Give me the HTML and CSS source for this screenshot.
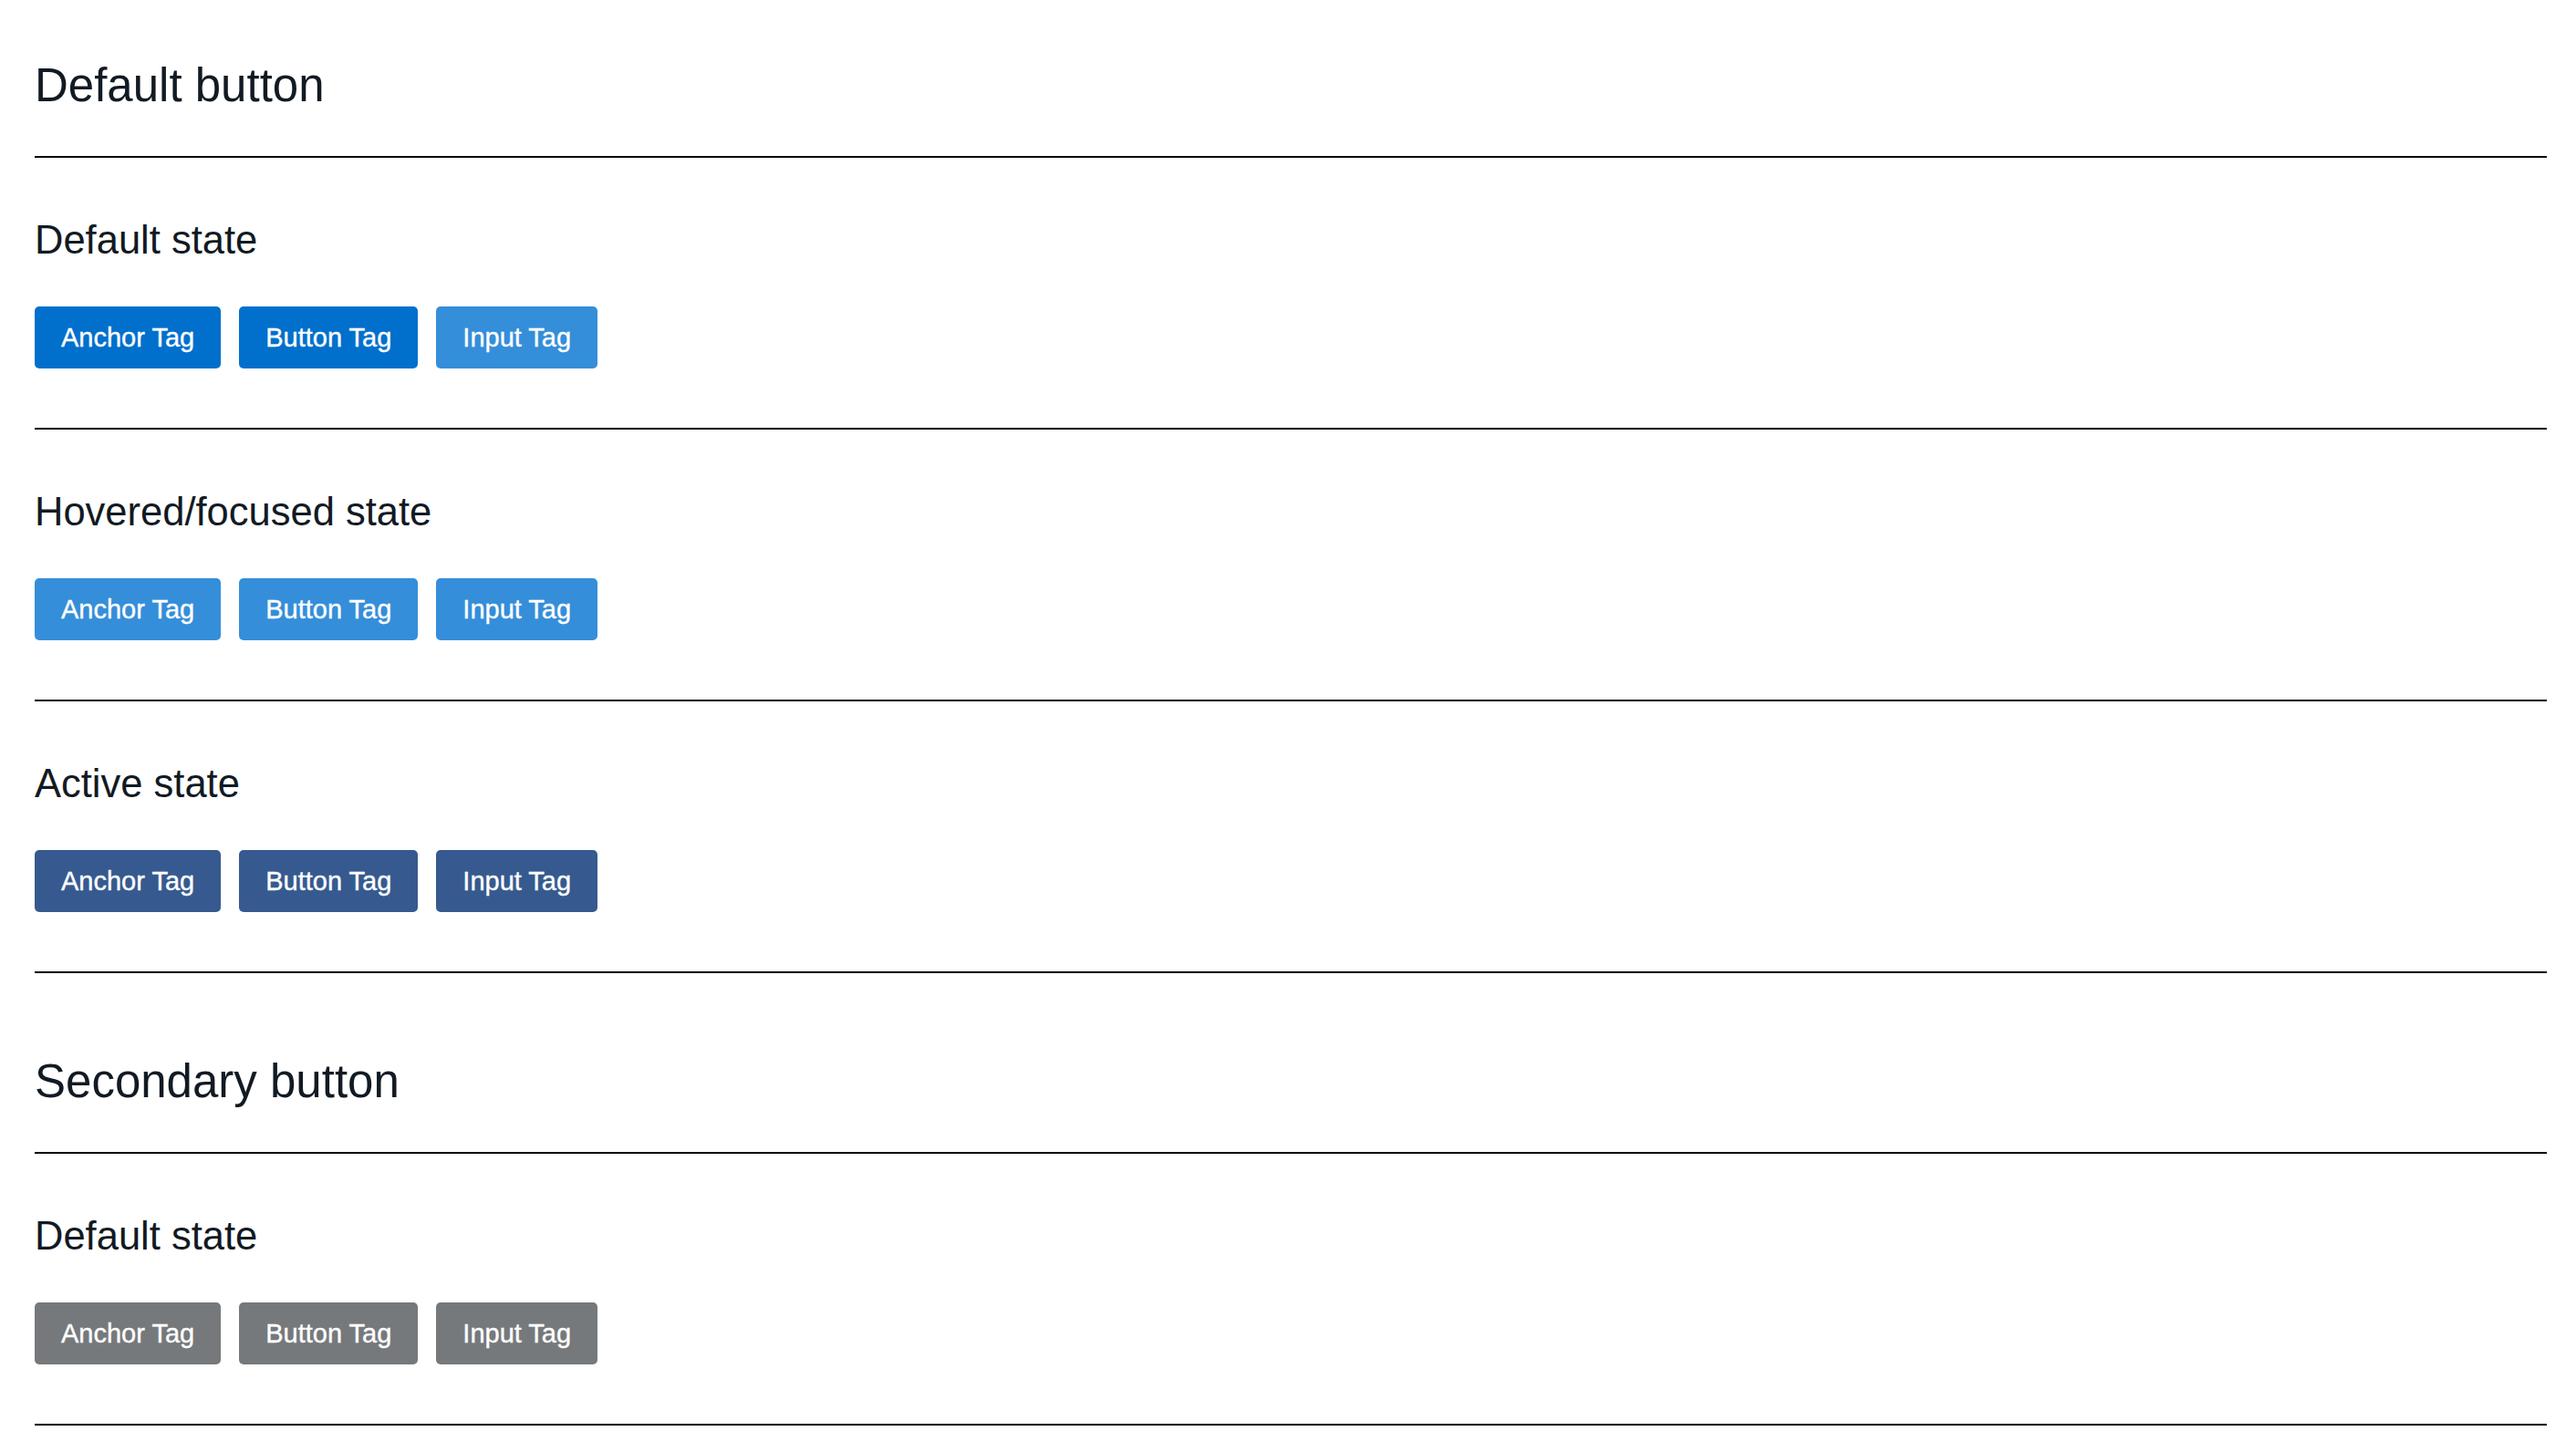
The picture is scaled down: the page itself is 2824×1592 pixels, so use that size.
FILE: index.html
```html
<!DOCTYPE html>
<html lang="en">
<head>
<meta charset="utf-8">
<title>Buttons</title>
<link rel="stylesheet" href="styles.css">
</head>
<body>
<main class="page">
  <section class="group group-first">
    <h2 class="group-title">Default button</h2>
    <hr class="rule">
    <div class="state">
      <h3 class="state-title">Default state</h3>
      <div class="btn-row">
        <a class="btn btn-primary" href="#">Anchor Tag</a>
        <button class="btn btn-primary" type="button">Button Tag</button>
        <input class="btn btn-primary-light" type="button" value="Input Tag">
      </div>
      <hr class="rule">
    </div>
    <div class="state">
      <h3 class="state-title">Hovered/focused state</h3>
      <div class="btn-row">
        <a class="btn btn-primary-light" href="#">Anchor Tag</a>
        <button class="btn btn-primary-light" type="button">Button Tag</button>
        <input class="btn btn-primary-light" type="button" value="Input Tag">
      </div>
      <hr class="rule">
    </div>
    <div class="state">
      <h3 class="state-title">Active state</h3>
      <div class="btn-row">
        <a class="btn btn-primary-dark" href="#">Anchor Tag</a>
        <button class="btn btn-primary-dark" type="button">Button Tag</button>
        <input class="btn btn-primary-dark" type="button" value="Input Tag">
      </div>
      <hr class="rule">
    </div>
  </section>
  <section class="group">
    <h2 class="group-title">Secondary button</h2>
    <hr class="rule">
    <div class="state">
      <h3 class="state-title">Default state</h3>
      <div class="btn-row">
        <a class="btn btn-secondary" href="#">Anchor Tag</a>
        <button class="btn btn-secondary" type="button">Button Tag</button>
        <input class="btn btn-secondary" type="button" value="Input Tag">
      </div>
      <hr class="rule">
    </div>
  </section>
</main>
</body>
</html>
```

FILE: styles.css
```css
html, body {
  margin: 0;
  padding: 0;
  background: #ffffff;
}

body {
  font-family: "Liberation Sans", Arial, Helvetica, sans-serif;
  color: #121a23;
}

.page {
  padding: 0 32px 0 38px;
}

.group {
  margin-top: 88px;
}

.group-first {
  margin-top: 63px;
}

.group-title {
  margin: 0 0 47px 0;
  font-size: 51px;
  font-weight: 400;
  line-height: 61px;
  color: #121a23;
}

.rule {
  margin: 0;
  border: none;
  border-top: 2px solid #000000;
  height: 0;
}

.state-title {
  margin: 65px 0 48px 0;
  font-size: 43.5px;
  font-weight: 400;
  line-height: 50px;
  color: #121a23;
}

.btn-row {
  display: flex;
  gap: 20px;
  margin-bottom: 65px;
}

.btn {
  display: inline-block;
  box-sizing: border-box;
  height: 68px;
  margin: 0;
  padding: 17px 29px;
  border: none;
  border-radius: 5px;
  font-family: "Liberation Sans", Arial, Helvetica, sans-serif;
  font-size: 29px;
  font-weight: 400;
  line-height: 34px;
  color: #ffffff;
  -webkit-text-stroke: 0.35px #ffffff;
  text-decoration: none;
  cursor: pointer;
  -webkit-appearance: none;
  appearance: none;
}

.btn-primary {
  background: #0070cc;
}

.btn-primary-light {
  background: #358ed9;
}

.btn-primary-dark {
  background: #365a8f;
}

.btn-secondary {
  background: #76797c;
}
```
